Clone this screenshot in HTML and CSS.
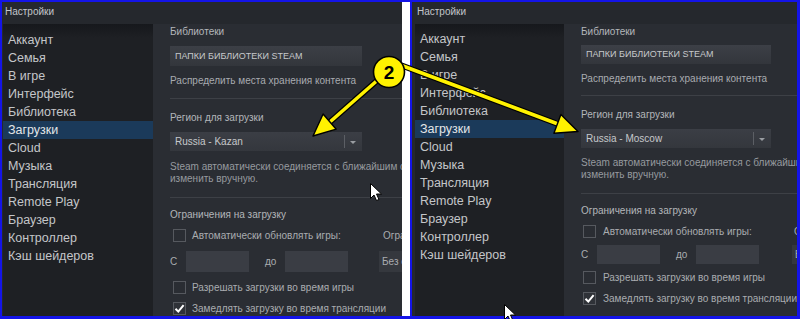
FILE: index.html
```html
<!DOCTYPE html>
<html lang="ru">
<head>
<meta charset="utf-8">
<title>Настройки</title>
<link rel="stylesheet" href="styles.css">
</head>
<body>
<div class="frame">
  <section class="panel panel--left">
    <div class="titlebar">Настройки</div>
    <div class="panel-body">
      <nav class="sidebar">
        <div class="nav-item">Аккаунт</div>
        <div class="nav-item">Семья</div>
        <div class="nav-item">В игре</div>
        <div class="nav-item">Интерфейс</div>
        <div class="nav-item">Библиотека</div>
        <div class="nav-item nav-item--active">Загрузки</div>
        <div class="nav-item">Cloud</div>
        <div class="nav-item">Музыка</div>
        <div class="nav-item">Трансляция</div>
        <div class="nav-item">Remote Play</div>
        <div class="nav-item">Браузер</div>
        <div class="nav-item">Контроллер</div>
        <div class="nav-item">Кэш шейдеров</div>
      </nav>
      <div class="content">
        <div class="label">Библиотеки</div>
        <div class="btn">ПАПКИ БИБЛИОТЕКИ STEAM</div>
        <div class="hint">Распределить места хранения контента</div>
        <div class="sep"></div>
        <div class="label label--section">Регион для загрузки</div>
        <div class="select"><span class="select-text">Russia - Kazan</span><span class="select-div"></span><span class="caret"></span></div>
        <div class="desc">Steam автоматически соединяется с ближайшим сервером загрузки, но это можно<br>изменить вручную.</div>
        <div class="sep sep--second"></div>
        <div class="label label--limits">Ограничения на загрузку</div>
        <div class="row row--first">
          <span class="check"></span><span class="check-label">Автоматически обновлять игры:</span>
          <span class="col3">Ограничение скорости загрузки</span>
        </div>
        <div class="row row--times">
          <span class="time-label">С</span><span class="field"></span>
          <span class="time-label time-label--to">до</span><span class="field"></span>
          <span class="col3 col3--box">Без ограничения</span>
        </div>
        <div class="row row--opt">
          <span class="check"></span><span class="check-label">Разрешать загрузки во время игры</span>
        </div>
        <div class="row row--opt2">
          <span class="check check--on"><svg width="11" height="11" viewBox="0 0 11 11"><path d="M1.5 5.8 L4.3 8.6 L9.6 2.2" fill="none" stroke="#fff" stroke-width="2"/></svg></span><span class="check-label">Замедлять загрузку во время трансляции</span>
        </div>
      </div>
    </div>
  </section>
  <div class="strip"></div>
  <section class="panel panel--right">
    <div class="titlebar">Настройки</div>
    <div class="panel-body">
      <nav class="sidebar">
        <div class="nav-item">Аккаунт</div>
        <div class="nav-item">Семья</div>
        <div class="nav-item">В игре</div>
        <div class="nav-item">Интерфейс</div>
        <div class="nav-item">Библиотека</div>
        <div class="nav-item nav-item--active">Загрузки</div>
        <div class="nav-item">Cloud</div>
        <div class="nav-item">Музыка</div>
        <div class="nav-item">Трансляция</div>
        <div class="nav-item">Remote Play</div>
        <div class="nav-item">Браузер</div>
        <div class="nav-item">Контроллер</div>
        <div class="nav-item">Кэш шейдеров</div>
      </nav>
      <div class="content">
        <div class="label">Библиотеки</div>
        <div class="btn">ПАПКИ БИБЛИОТЕКИ STEAM</div>
        <div class="hint">Распределить места хранения контента</div>
        <div class="sep"></div>
        <div class="label label--section">Регион для загрузки</div>
        <div class="select"><span class="select-text">Russia - Moscow</span><span class="select-div"></span><span class="caret"></span></div>
        <div class="desc">Steam автоматически соединяется с ближайшим сервером загрузки, но это можно<br>изменить вручную.</div>
        <div class="sep sep--second"></div>
        <div class="label label--limits">Ограничения на загрузку</div>
        <div class="row row--first">
          <span class="check"></span><span class="check-label">Автоматически обновлять игры:</span>
          <span class="col3">Ограничение скорости загрузки</span>
        </div>
        <div class="row row--times">
          <span class="time-label">С</span><span class="field"></span>
          <span class="time-label time-label--to">до</span><span class="field"></span>
          <span class="col3 col3--box">Без ограничения</span>
        </div>
        <div class="row row--opt">
          <span class="check"></span><span class="check-label">Разрешать загрузки во время игры</span>
        </div>
        <div class="row row--opt2">
          <span class="check check--on"><svg width="11" height="11" viewBox="0 0 11 11"><path d="M1.5 5.8 L4.3 8.6 L9.6 2.2" fill="none" stroke="#fff" stroke-width="2"/></svg></span><span class="check-label">Замедлять загрузку во время трансляции</span>
        </div>
      </div>
    </div>
  </section>

  <svg class="overlay" width="800" height="319" viewBox="0 0 800 319">
    <line x1="380" y1="78" x2="331" y2="121" stroke="#000" stroke-width="6" stroke-linecap="round"/>
    <line x1="380" y1="78" x2="331" y2="121" stroke="#fff200" stroke-width="3.6" stroke-linecap="round"/>
    <polygon points="313,136 336.2,129.2 323.1,114" fill="#fff200" stroke="#000" stroke-width="1.4" stroke-linejoin="round"/>
    <line x1="395" y1="63" x2="558" y2="124" stroke="#000" stroke-width="6" stroke-linecap="round"/>
    <line x1="395" y1="63" x2="558" y2="124" stroke="#fff200" stroke-width="3.6" stroke-linecap="round"/>
    <polygon points="578,131.5 553.9,133.2 560.9,114.4" fill="#fff200" stroke="#000" stroke-width="1.4" stroke-linejoin="round"/>
    <circle cx="389" cy="72" r="15.5" fill="#fff200" stroke="#000" stroke-width="1.6"/>
    <text x="389" y="79" class="badge-text" text-anchor="middle">2</text>
    <path transform="translate(370.5 183.5)" d="M0 0 L0 15 L3.5 11.5 L6 17 L8.5 16 L6 10.5 L11 10.5 Z" fill="#fff" stroke="#000" stroke-width="1"/>
    <path transform="translate(504.5 304.5)" d="M0 0 L0 15 L3.5 11.5 L6 17 L8.5 16 L6 10.5 L11 10.5 Z" fill="#fff" stroke="#000" stroke-width="1"/>
  </svg>
</div>
</body>
</html>
```

FILE: styles.css
```css
* { box-sizing: border-box; }

html, body {
  margin: 0;
  padding: 0;
  background: #1414e8;
}

.frame {
  position: relative;
  width: 800px;
  height: 319px;
  display: flex;
  padding: 2px 3px 3px 2px;
  background: #1414e8;
  font-family: "Liberation Sans", Arial, sans-serif;
  overflow: hidden;
}

.panel {
  display: flex;
  flex-direction: column;
  background: #25282d;
  overflow: hidden;
}

.panel--left { width: 400px; flex: none; }

.strip {
  width: 8px;
  flex: none;
  background: #ffffff;
  margin-right: 2px;
}

.panel--right { flex: 1; min-width: 0; }

.titlebar {
  height: 22px;
  line-height: 20px;
  padding-left: 3px;
  font-size: 10px;
  color: #c3c6ca;
  flex: none;
}

.panel--right .titlebar { padding-left: 5px; }

.panel-body {
  flex: 1;
  display: flex;
  padding-left: 1px;
  min-height: 0;
}

.panel--right .panel-body { padding-left: 3px; }

.sidebar {
  width: 150px;
  flex: none;
  padding-top: 7px;
  background: linear-gradient(#16181c 0, #1e2024 14px, #1e2024 100%);
}

.panel--right .sidebar { width: 149px; padding-top: 6px; }

.nav-item {
  height: 18px;
  line-height: 18px;
  padding-left: 5px;
  font-size: 12.5px;
  color: #c4c6c9;
  white-space: nowrap;
}

.nav-item--active {
  background: #1b3a5a;
  color: #e4e6e8;
}

.content {
  flex: 1;
  min-width: 0;
  overflow: hidden;
  background: #2a2d33;
  padding-left: 17px;
  padding-top: 1px;
  white-space: nowrap;
  font-size: 10px;
}

.label {
  line-height: 14px;
  color: #b3b6ba;
}

.label--section { margin-top: 12px; }
.label--limits { margin-top: 10px; }

.btn {
  margin-top: 7px;
  width: 192px;
  height: 20px;
  line-height: 20px;
  padding-left: 5px;
  font-size: 9px;
  color: #c6c8cb;
  background: linear-gradient(#3c3f46, #33363c);
}

.panel--right .btn { margin-top: 6px; width: 190px; height: 19px; line-height: 19px; }

.hint {
  margin-top: 8px;
  line-height: 14px;
  color: #a8abb0;
}

.sep {
  margin-top: 10px;
  width: 420px;
  height: 1px;
  background: #3d4046;
}

.panel--right .sep { margin-top: 9px; }

.sep--second { margin-top: 12px; }
.panel--right .sep--second { margin-top: 12px; }

.select {
  margin-top: 7px;
  width: 192px;
  height: 19px;
  display: flex;
  align-items: center;
  background: linear-gradient(#3b3e45, #34373d);
}

.panel--right .select { width: 190px; }

.select-text {
  flex: 1;
  padding-left: 5px;
  color: #c6c8cb;
}

.select-div {
  width: 1px;
  height: 13px;
  background: #5c5f65;
}

.caret {
  width: 0;
  height: 0;
  margin: 1px 6px 0 5px;
  border-left: 3px solid transparent;
  border-right: 3px solid transparent;
  border-top: 3px solid #9a9da2;
}

.desc {
  margin-top: 10px;
  line-height: 12px;
  color: #969a9f;
}

.panel--right .desc { margin-top: 9px; }

.row {
  display: flex;
  align-items: center;
  color: #a9acb0;
}

.row > * { flex: none; }

.row--first { margin-top: 7px; height: 13px; }
.row--times { margin-top: 9px; height: 21px; }
.row--opt { margin-top: 9px; height: 13px; }
.row--opt2 { margin-top: 8px; height: 13px; }

.panel--right .row--times { margin-top: 7px; height: 19px; }
.panel--right .row--opt { margin-top: 7px; }

.check {
  width: 13px;
  height: 13px;
  margin-left: 3px;
  border: 1px solid #56595f;
  background: #2a2d33;
  display: flex;
  align-items: center;
  justify-content: center;
}

.panel--right .check { margin-left: 2px; }

.check--on {
  background: #2f3238;
}

.check-label {
  margin-left: 6px;
}

.panel--right .check-label { margin-left: 7px; }

.row--first .check-label { width: 191px; }

.col3 {
  color: #a9acb0;
}

.time-label {
  width: 16px;
  color: #a9acb0;
}

.time-label--to {
  width: 20px;
  margin-left: 16px;
}

.field {
  width: 63px;
  height: 100%;
  background: #3a3d44;
}

.col3--box {
  margin-left: 31px;
  height: 100%;
  line-height: 21px;
  padding-left: 3px;
  width: 120px;
  background: #35383e;
}

.panel--right .col3--box { margin-left: 33px; line-height: 19px; }

.overlay {
  position: absolute;
  left: 0;
  top: 0;
  pointer-events: none;
}

.badge-text {
  font-family: "Liberation Sans", Arial, sans-serif;
  font-weight: bold;
  font-size: 19px;
  fill: #000;
}
```
